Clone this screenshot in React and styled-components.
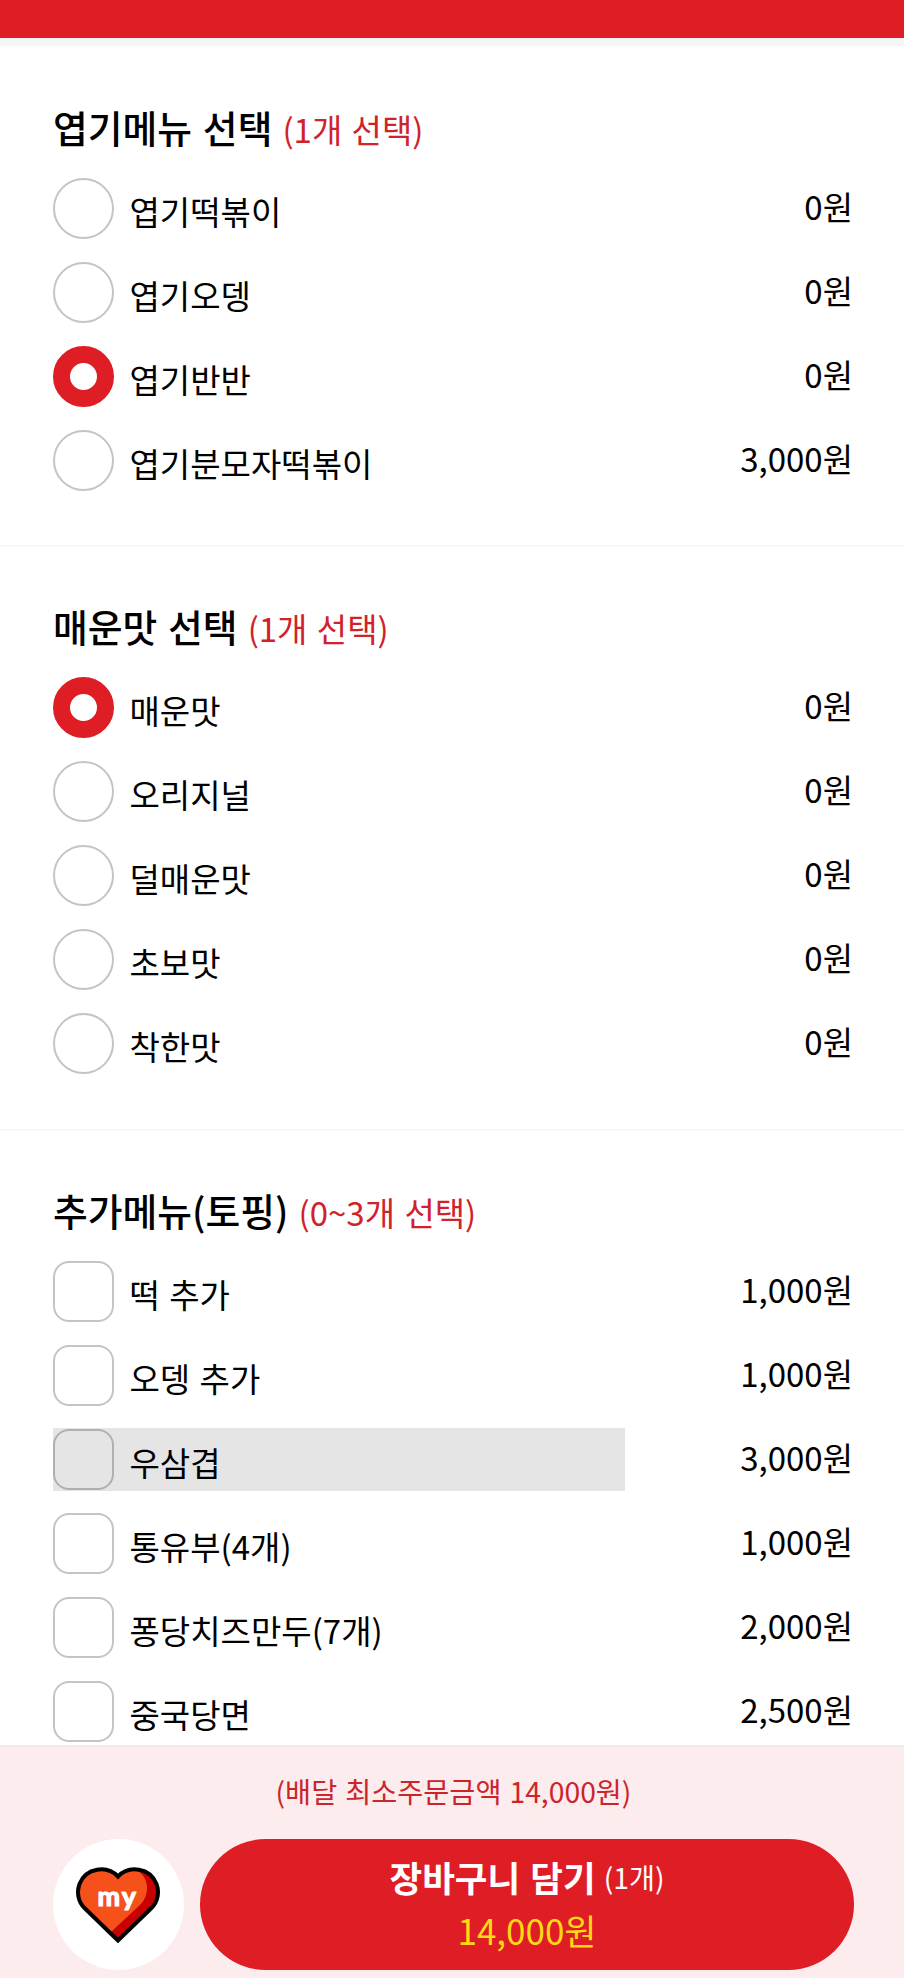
import React, { useState } from "react"
import styled, { createGlobalStyle, css } from "styled-components"

const GlobalStyle = createGlobalStyle`
  * {
    box-sizing: border-box;
  }
  body {
    margin: 0;
    background: #fff;
    color: #000;
    font-family: "Noto Sans CJK KR", "Noto Sans", sans-serif;
    overflow: hidden;
  }
`

const Page = styled.div`
  display: flex;
  flex-direction: column;
  height: 1978px;
  overflow: hidden;
`

const TopBar = styled.header`
  flex: none;
  height: 46px;
  background: #df1d25;
  border-bottom: 8.5px solid #f5f5f5;
`

const Content = styled.main`
  flex: 1;
  min-height: 0;
  overflow: hidden;
`

const StyledSection = styled.section`
  padding: 52.5px 51px 53.4px 53px;

  & + & {
    border-top: 2px solid #f7f7f7;
    padding-top: 50.8px;
  }
`

const SectionTitle = styled.h2`
  display: flex;
  align-items: baseline;
  height: 56px;
  margin: 0 0 22.4px;
  font-size: 37.8px;
  font-weight: 500;
  line-height: 56px;
  word-spacing: 0.06em;
  white-space: pre;

  span {
    margin-left: 10px;
    color: #d0222a;
    font-size: 33px;
    font-weight: 400;
    line-height: 40px;
    word-spacing: 0.06em;
  }
`

const OptionList = styled.ul`
  display: grid;
  row-gap: 21px;
  margin: 0;
  padding: 0;
  list-style: none;
`

const OptionRow = styled.li`
  display: flex;
  justify-content: space-between;
  height: 63px;
`

const OptionLabel = styled.label`
  display: flex;
  align-items: center;
  width: 572px;
  background: ${({ $pressed }) => ($pressed ? "#e5e5e5" : "transparent")};
  cursor: pointer;

  input {
    display: none;
  }
`

const Mark = styled.span`
  flex: none;
  width: 61px;
  height: 61px;
  border: 2px solid ${({ $pressed }) => ($pressed ? "#b0b0b0" : "#c4c4c4")};
  border-radius: ${({ $round }) => ($round ? "50%" : "16px")};

  ${({ $checked }) =>
    $checked &&
    css`
      border: 17px solid #df1d25;
    `}
`

const OptionName = styled.span`
  padding: 5px 0 0 15.5px;
  font-size: 33px;
  line-height: 48px;
  word-spacing: 0.06em;
  white-space: nowrap;
`

const OptionPrice = styled.span`
  padding-top: 5px;
  font-size: 33px;
  line-height: 48px;
`

const Footer = styled.footer`
  flex: none;
  height: 233px;
  padding: 16px 50px 0 53px;
  background: #fceced;
  border-top: 2px solid #f2e8e9;
`

const Notice = styled.p`
  margin: 0 0 20px;
  color: #cb252c;
  font-size: 28.3px;
  line-height: 56px;
  text-align: center;
  word-spacing: 0.06em;
`

const Actions = styled.div`
  display: flex;
  gap: 16px;
  height: 131px;
`

const MyButton = styled.button`
  display: flex;
  align-items: center;
  justify-content: center;
  flex: none;
  width: 131px;
  padding: 2px 1px 0 0;
  border: 0;
  border-radius: 50%;
  background: #fff;
`

const CartButton = styled.button`
  display: flex;
  flex: 1;
  flex-direction: column;
  align-items: center;
  padding: 10px 0 0;
  border: 0;
  border-radius: 66px;
  background: #df1d25;
  color: #fff;
  font-family: inherit;
`

const CartTitle = styled.span`
  display: flex;
  align-items: center;
  font-size: 35.5px;
  font-weight: 700;
  line-height: 56px;
  word-spacing: 0.06em;

  small {
    margin-left: 8px;
    font-size: 28.3px;
    font-weight: 400;
  }
`

const CartPrice = styled.span`
  color: #ffd816;
  font-size: 35px;
  line-height: 50px;
`

const SECTIONS = [
  {
    id: "menu",
    title: "엽기메뉴 선택",
    hint: "(1개 선택)",
    type: "radio",
    options: [
      { name: "엽기떡볶이", price: 0 },
      { name: "엽기오뎅", price: 0 },
      { name: "엽기반반", price: 0 },
      { name: "엽기분모자떡볶이", price: 3000 },
    ],
  },
  {
    id: "spicy",
    title: "매운맛 선택",
    hint: "(1개 선택)",
    type: "radio",
    options: [
      { name: "매운맛", price: 0 },
      { name: "오리지널", price: 0 },
      { name: "덜매운맛", price: 0 },
      { name: "초보맛", price: 0 },
      { name: "착한맛", price: 0 },
    ],
  },
  {
    id: "topping",
    title: "추가메뉴(토핑)",
    hint: "(0~3개 선택)",
    type: "checkbox",
    options: [
      { name: "떡 추가", price: 1000 },
      { name: "오뎅 추가", price: 1000 },
      { name: "우삼겹", price: 3000, pressed: true },
      { name: "통유부(4개)", price: 1000 },
      { name: "퐁당치즈만두(7개)", price: 2000 },
      { name: "중국당면", price: 2500 },
    ],
  },
]

const won = (value) => `${value.toLocaleString("en-US")}원`

function HeartIcon() {
  return (
    <svg width="84" height="77" viewBox="0 0 84 77">
      <path
        d="M42 74 L9 42 C2 35 0 25 4 16 C10 0 31 -2 42 9.500 C53 -2 74 0 80 16 C84 25 82 35 75 42 Z"
        fill="#c90000"
      />
      <path
        d="M35 65 L9 42 C2 35 0 25 4 16 C10 0 31 -2 42 9.500 C48 4 56 1.500 62 4 C73 11 74 27 65 37 Z"
        fill="#f6501b"
      />
      <path
        d="M42 73.500 L9 41.500 C2 35 .5 25 3.500 17 C10 .5 31 -2 42 9.500 C53 -2 74 .5 80.500 17 C83.500 25 82 35 75 41.500 Z"
        fill="none"
        stroke="#000"
        strokeWidth="4"
      />
      <text
        x="21.500"
        y="38.500"
        fill="#fff"
        stroke="#fff"
        strokeWidth="1.200"
        strokeLinejoin="round"
        fontFamily="Lato, sans-serif"
        fontSize="27"
        fontWeight="700"
        letterSpacing="2"
      >
        my
      </text>
    </svg>
  )
}

function OptionSection({ section, selected, onToggle }) {
  return (
    <StyledSection>
      <SectionTitle>
        {section.title}
        <span>{section.hint}</span>
      </SectionTitle>
      <OptionList>
        {section.options.map((option) => (
          <OptionRow key={option.name}>
            <OptionLabel $pressed={option.pressed}>
              <input
                type={section.type}
                name={section.id}
                checked={selected.includes(option.name)}
                onChange={() => onToggle(section, option.name)}
              />
              <Mark
                $round={section.type === "radio"}
                $checked={selected.includes(option.name)}
                $pressed={option.pressed}
              />
              <OptionName>{option.name}</OptionName>
            </OptionLabel>
            <OptionPrice>{won(option.price)}</OptionPrice>
          </OptionRow>
        ))}
      </OptionList>
    </StyledSection>
  )
}

export default function App() {
  const [selected, setSelected] = useState({
    menu: ["엽기반반"],
    spicy: ["매운맛"],
    topping: [],
  })

  const handleToggle = (section, name) => {
    setSelected((prev) => {
      if (section.type === "radio") return { ...prev, [section.id]: [name] }
      const current = prev[section.id]
      if (current.includes(name)) {
        return { ...prev, [section.id]: current.filter((n) => n !== name) }
      }
      // up to three toppings
      return current.length < 3 ? { ...prev, [section.id]: [...current, name] } : prev
    })
  }

  return (
    <>
      <GlobalStyle />
      <Page>
        <TopBar />
        <Content>
          {SECTIONS.map((section) => (
            <OptionSection
              key={section.id}
              section={section}
              selected={selected[section.id]}
              onToggle={handleToggle}
            />
          ))}
        </Content>
        <Footer>
          <Notice>(배달 최소주문금액 14,000원)</Notice>
          <Actions>
            <MyButton aria-label="my">
              <HeartIcon />
            </MyButton>
            <CartButton>
              <CartTitle>
                장바구니 담기<small>(1개)</small>
              </CartTitle>
              <CartPrice>{won(14000)}</CartPrice>
            </CartButton>
          </Actions>
        </Footer>
      </Page>
    </>
  )
}
